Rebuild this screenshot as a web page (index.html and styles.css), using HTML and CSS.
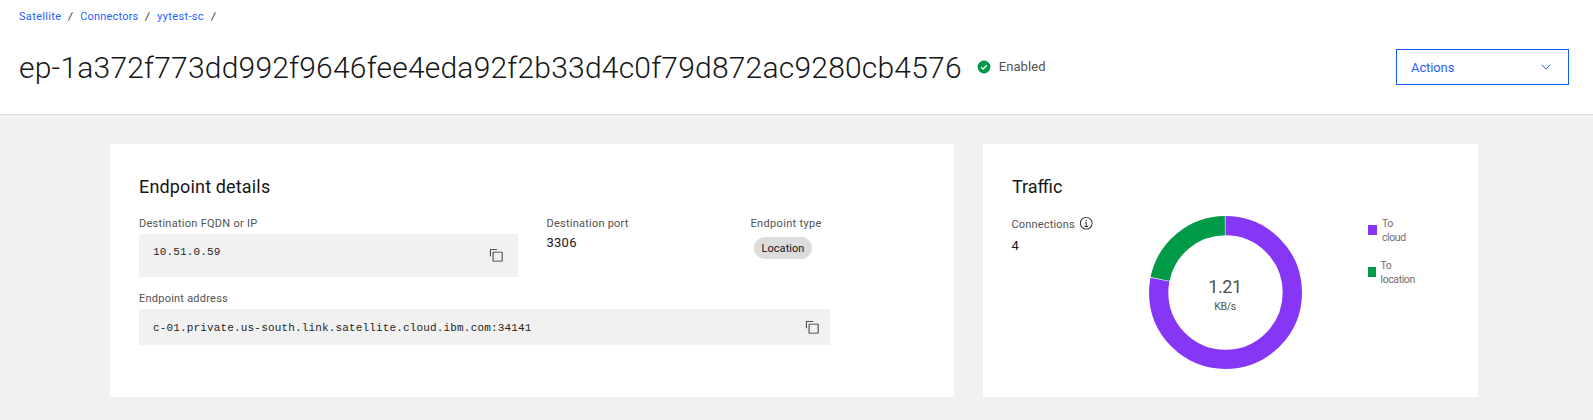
FILE: index.html
```html
<!DOCTYPE html>
<html lang="en">
<head>
<meta charset="utf-8">
<title>Endpoint details</title>
<link rel="stylesheet" href="styles.css">
</head>
<body>
<svg class="sprite" aria-hidden="true">
  <symbol id="copy" viewBox="0 0 32 32"><path d="M28 10v18H10V10h18m0-2H10a2 2 0 0 0-2 2v18a2 2 0 0 0 2 2h18a2 2 0 0 0 2-2V10a2 2 0 0 0-2-2zM4 18H2V4a2 2 0 0 1 2-2h14v2H4z"/></symbol>
</svg>
<header class="header">
  <nav class="crumbs">
    <a class="crumb crumb-wide">Satellite</a><span class="sep">/</span>
    <a class="crumb">Connectors</a><span class="sep">/</span>
    <a class="crumb crumb-wide">yytest-sc</a><span class="sep">/</span>
  </nav>
  <div class="title-row">
    <h1 class="title">ep-1a372f773dd992f9646fee4eda92f2b33d4c0f79d872ac9280cb4576</h1>
    <svg class="status-icon" viewBox="0 0 14 14"><circle cx="7" cy="7" r="6.4" fill="#009a49"/><path d="M4.2 7.1l1.9 1.9 3.7-3.7" fill="none" stroke="#fff" stroke-width="1.3"/></svg>
    <span class="status">Enabled</span>
    <button class="actions">Actions
      <svg class="chevron" viewBox="0 0 10 6"><path d="M.5.6L5 5.1 9.5.6" fill="none" stroke="currentColor"/></svg>
    </button>
  </div>
</header>
<main class="main">
  <section class="card details">
    <h2 class="heading">Endpoint details</h2>
    <div class="fields">
      <div>
        <div class="label label-fqdn">Destination FQDN or IP</div>
        <div class="snippet snippet-ip"><code class="code">10.51.0.59</code><svg class="icon"><use href="#copy"/></svg></div>
      </div>
      <div>
        <div class="label">Destination port</div>
        <div class="value">3306</div>
      </div>
      <div>
        <div class="label label-type">Endpoint type</div>
        <span class="tag">Location</span>
      </div>
    </div>
    <div class="label label-address">Endpoint address</div>
    <div class="snippet snippet-address"><code class="code">c-01.private.us-south.link.satellite.cloud.ibm.com:34141</code><svg class="icon"><use href="#copy"/></svg></div>
  </section>
  <section class="card traffic">
    <h2 class="heading heading-traffic">Traffic</h2>
    <div class="traffic-body">
      <div class="connections">
        <div class="connections-label"><span class="label label-connections">Connections</span>
          <svg class="icon" viewBox="0 0 32 32"><path d="M17 22v-8h-4v2h2v6h-3v2h8v-2zM16 8a1.5 1.5 0 1 0 1.5 1.5A1.5 1.5 0 0 0 16 8z"/><path d="M16 30a14 14 0 1 1 14-14 14 14 0 0 1-14 14zm0-26a12 12 0 1 0 12 12A12 12 0 0 0 16 4z"/></svg>
        </div>
        <div class="value value-count">4</div>
      </div>
      <div class="donut">
        <svg class="donut-chart" viewBox="0 0 153 153">
          <g fill="none" stroke-width="19.3" transform="rotate(-90 76.5 76.5)">
            <circle cx="76.5" cy="76.5" r="66.85" stroke="#8637f6" pathLength="1000" stroke-dasharray="781 219"/>
            <circle cx="76.5" cy="76.5" r="66.85" stroke="#009a49" pathLength="1000" stroke-dasharray="216 784" stroke-dashoffset="-782.5"/>
          </g>
        </svg>
        <div class="donut-text"><span class="rate">1.21</span><span class="unit">KB/s</span></div>
      </div>
      <div class="legend">
        <div class="legend-item"><i class="swatch cloud"></i><span class="legend-text">To<br>cloud</span></div>
        <div class="legend-item"><i class="swatch location"></i><span class="legend-text">To<br>location</span></div>
      </div>
    </div>
  </section>
</main>
</body>
</html>
```
FILE: styles.css
```css
* { box-sizing: border-box; }
body { margin: 0; min-height: 420px; background: #f1f1f1; color: #161616; font-family: Roboto, "Liberation Sans", sans-serif; font-size: 13px; }
.sprite { display: none; }
svg { display: block; flex: none; }

.header { height: 115px; padding: 10px 24px 0 19px; background: #fff; border-bottom: 1px solid #dcdcdc; }
.crumbs { display: flex; height: 14px; font-size: 11px; line-height: 14px; }
.crumb { color: #1f62fe; letter-spacing: .18px; }
.crumb-wide { letter-spacing: .34px; }
.sep { width: 18.8px; padding-left: 7px; transform: skewX(-6deg); }
.title-row { display: flex; align-items: center; height: 40px; margin-top: 23px; }
.title { margin: 0; padding-top: 2px; font-size: 30px; font-weight: 300; line-height: 40px; letter-spacing: .21px; }
.status-icon { width: 14px; height: 14px; margin-left: 15.5px; }
.status { margin-left: 7.5px; line-height: 16px; letter-spacing: .06px; color: #525252; }
.actions { display: flex; align-items: center; justify-content: space-between; width: 173px; height: 36px; margin-left: auto; padding: 0 17px 0 14px; border: 1px solid #0f5cfd; background: #fff; color: #1f62fe; font: 13px Roboto, sans-serif; letter-spacing: -.1px; }
.chevron { width: 10px; height: 6px; }

.main { display: flex; gap: 29px; padding: 29px 115px 0 110px; }
.card { height: 253px; padding: 31px 29px 0; background: #fff; }
.details { width: 844px; }
.traffic { width: 495px; }
.heading { margin: 0 0 17px; font-size: 18px; font-weight: 400; line-height: 24px; letter-spacing: .16px; }
.heading-traffic { letter-spacing: 0; }
.fields { display: grid; grid-template-columns: 407.5px 204px 1fr; }
.label { padding-top: 1px; font-size: 11px; line-height: 14px; letter-spacing: .23px; color: #525252; }
.label-fqdn { letter-spacing: .27px; }
.label-type { letter-spacing: .34px; }
.label-connections { letter-spacing: .16px; }
.label-address { margin-top: 14px; }
.snippet { display: flex; justify-content: space-between; margin-top: 3px; background: #f1f1f1; }
.snippet-ip { width: 379px; height: 43px; padding: 11px 14.5px 0 14px; }
.snippet-ip .icon { margin-top: 3px; }
.snippet-address { width: 691px; height: 36px; padding: 12px 10.5px 0 14px; }
.snippet-address .icon { margin-top: -1px; }
.code { font: 11px/14px "Liberation Mono", monospace; letter-spacing: .157px; color: #262626; }
.icon { width: 14.5px; height: 14.5px; fill: #262626; }
.value { margin-top: 4px; line-height: 16px; letter-spacing: .25px; }
.tag { display: block; width: 58px; height: 22px; margin: 6px 0 0 3.5px; padding-top: 1px; border-radius: 11px; background: #dcdcdc; text-align: center; font-size: 11px; line-height: 22px; letter-spacing: .06px; }

.traffic-body { display: flex; margin-left: -.5px; }
.connections { width: 137px; }
.connections-label { display: flex; gap: 4px; height: 15px; }
.connections-label .label { padding-top: 2px; }
.value-count { margin-top: 7px; }
.donut { display: grid; width: 153px; height: 153px; }
.donut-chart, .donut-text { grid-area: 1 / 1; }
.donut-chart { width: 153px; height: 153px; }
.donut-text { display: flex; flex-direction: column; align-items: center; padding-top: 59px; color: #525252; }
.rate { font-size: 18px; line-height: 24px; letter-spacing: -.4px; }
.unit { padding-top: 1px; font-size: 10.5px; line-height: 14px; letter-spacing: -.3px; }
.legend { display: grid; gap: 14px; align-content: start; margin-left: 66.5px; }
.legend-item { display: flex; align-items: center; gap: 5px; height: 28px; font-size: 10.5px; line-height: 14px; letter-spacing: -.4px; color: #6f6f6f; }
.legend-text { padding-top: 2px; }
.swatch { width: 9px; height: 10px; }
.cloud { background: #8637f6; }
.location { width: 8px; margin-right: -.5px; background: #009a49; }
```
